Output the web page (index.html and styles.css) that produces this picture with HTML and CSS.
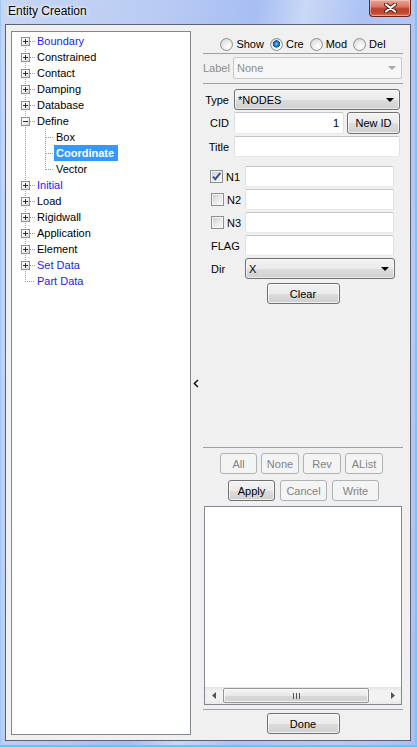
FILE: index.html
```html
<!DOCTYPE html>
<html lang="en">
<head>
  <meta charset="UTF-8" />
  <title>Entity Creation</title>
  <link rel="stylesheet" href="styles.css">
</head>
<body>
  <div class="window">
    <div class="titlebar">
      <span class="title">Entity Creation</span>
      <button class="close">
        <svg width="13" height="10" viewBox="0 0 13 10">
          <path d="M2 1.5 L11 8.5 M11 1.5 L2 8.5" stroke="#4a1a14" stroke-width="4" stroke-linecap="round"/>
          <path d="M2 1.5 L11 8.5 M11 1.5 L2 8.5" stroke="#fff" stroke-width="2.2" stroke-linecap="round"/>
        </svg>
      </button>
    </div>

    <div class="client">
      <!-- Tree -->
      <div class="tree">
        <ul class="nodes">
          <li class="row"><span class="tog"></span><span class="dash"></span><span class="lbl blue">Boundary</span></li>
          <li class="row"><span class="tog"></span><span class="dash"></span><span class="lbl">Constrained</span></li>
          <li class="row"><span class="tog"></span><span class="dash"></span><span class="lbl">Contact</span></li>
          <li class="row"><span class="tog"></span><span class="dash"></span><span class="lbl">Damping</span></li>
          <li class="row"><span class="tog"></span><span class="dash"></span><span class="lbl">Database</span></li>
          <li>
            <div class="row"><span class="tog open"></span><span class="dash"></span><span class="lbl">Define</span></div>
            <ul class="kids">
              <li class="row"><span class="dash kid"></span><span class="lbl">Box</span></li>
              <li class="row"><span class="dash kid"></span><span class="lbl sel">Coordinate</span></li>
              <li class="row"><span class="dash kid"></span><span class="lbl">Vector</span></li>
            </ul>
          </li>
          <li class="row"><span class="tog"></span><span class="dash"></span><span class="lbl blue">Initial</span></li>
          <li class="row"><span class="tog"></span><span class="dash"></span><span class="lbl">Load</span></li>
          <li class="row"><span class="tog"></span><span class="dash"></span><span class="lbl">Rigidwall</span></li>
          <li class="row"><span class="tog"></span><span class="dash"></span><span class="lbl">Application</span></li>
          <li class="row"><span class="tog"></span><span class="dash"></span><span class="lbl">Element</span></li>
          <li class="row"><span class="tog"></span><span class="dash"></span><span class="lbl blue">Set Data</span></li>
          <li class="row"><span class="dash leaf"></span><span class="lbl blue">Part Data</span></li>
        </ul>
      </div>

      <div class="splitter">
        <svg width="6" height="9" viewBox="0 0 6 9"><polyline points="5,1 1.3,4.5 5,8" fill="none" stroke="#000" stroke-width="1.3"/></svg>
      </div>

      <!-- Form -->
      <div class="panel">
        <div class="modes">
          <label class="opt"><span class="radio"></span>Show</label>
          <label class="opt"><span class="radio on"></span>Cre</label>
          <label class="opt"><span class="radio"></span>Mod</label>
          <label class="opt"><span class="radio"></span>Del</label>
        </div>
        <div class="sep sep-a"></div>

        <div class="line line-label">
          <span class="lab off">Label</span>
          <div class="combo off wide"><span>None</span><span class="arrow grey"></span></div>
        </div>
        <div class="sep sep-b"></div>

        <div class="line line-type">
          <span class="lab">Type</span>
          <div class="combo type"><span>*NODES</span><span class="arrow"></span></div>
        </div>
        <div class="line line-cid">
          <span class="lab">CID</span>
          <div class="field cid">1</div>
          <button class="btn newid">New ID</button>
        </div>
        <div class="line line-title">
          <span class="lab">Title</span>
          <div class="field title-in"></div>
        </div>

        <div class="line node n1">
          <span class="chk"><span class="box on"><svg width="11" height="11" viewBox="0 0 11 11"><path d="M2 5.5 L4.3 8.2 L9.3 1.8" fill="none" stroke="#3b4f8c" stroke-width="1.9"/></svg></span>N1</span>
          <div class="field nin"></div>
        </div>
        <div class="line node">
          <span class="chk shift"><span class="box"></span>N2</span>
          <div class="field nin"></div>
        </div>
        <div class="line node">
          <span class="chk shift"><span class="box"></span>N3</span>
          <div class="field nin"></div>
        </div>
        <div class="line node">
          <span class="chk plain">FLAG</span>
          <div class="field nin"></div>
        </div>
        <div class="line node">
          <span class="chk plain">Dir</span>
          <div class="combo dir"><span>X</span><span class="arrow"></span></div>
        </div>
        <div class="center clear-row"><button class="btn wide-btn">Clear</button></div>

        <div class="spacer"></div>

        <div class="sep sep-c"></div>
        <div class="center btns1">
          <button class="btn off small">All</button>
          <button class="btn off mid">None</button>
          <button class="btn off mid">Rev</button>
          <button class="btn off mid">AList</button>
        </div>
        <div class="center btns2">
          <button class="btn act">Apply</button>
          <button class="btn off act">Cancel</button>
          <button class="btn off act">Write</button>
        </div>

        <div class="list">
          <div class="list-body"></div>
          <div class="hscroll">
            <span class="sbtn"><svg width="4" height="7" viewBox="0 0 4 7"><polygon points="4,0 0,3.5 4,7" fill="#555"/></svg></span>
            <div class="track">
              <div class="thumb">
                <svg width="7" height="6" viewBox="0 0 7 6"><rect x="0" y="0" width="1" height="6" fill="#555"/><rect x="3" y="0" width="1" height="6" fill="#555"/><rect x="6" y="0" width="1" height="6" fill="#555"/></svg>
              </div>
            </div>
            <span class="sbtn"><svg width="4" height="7" viewBox="0 0 4 7"><polygon points="0,0 4,3.5 0,7" fill="#555"/></svg></span>
          </div>
        </div>

        <div class="sep sep-d"></div>
        <div class="center done-row"><button class="btn wide-btn">Done</button></div>
      </div>
    </div>
  </div>
</body>
</html>
```

FILE: styles.css
```css
* { box-sizing: border-box; }
html, body {
  margin: 0;
  padding: 0;
}
body {
  width: 417px;
  height: 747px;
  overflow: hidden;
  font-family: "Liberation Sans", Arial, sans-serif;
  font-size: 11px;
  color: #000;
}
ul { list-style: none; margin: 0; padding: 0; }
button { font: inherit; color: inherit; padding: 0; }

/* Aero frame */
.window {
  width: 417px;
  height: 747px;
  display: flex;
  flex-direction: column;
  padding: 0 6px 6px 5px;
  background: linear-gradient(100deg, #c7d6f5 0%, #b9cbf3 30%, #a7bef4 47%, #cad8f6 56%, #adc3f4 66%, #b8caf4 85%, #a9c0f3 100%);
  box-shadow: inset 0 -2px 0 #4fcff6, inset -2px 0 0 #6fc9f4, inset 1px 0 0 #9fc8f2;
}
.titlebar {
  height: 24px;
  display: flex;
  justify-content: space-between;
  align-items: flex-start;
  padding-left: 3px;
}
.title {
  font-size: 12px;
  line-height: 23px;
  text-shadow: 0 0 6px #fff, 0 0 3px #fff;
}
.close {
  width: 42px;
  height: 17px;
  border: 1px solid #6b2219;
  border-top: none;
  border-radius: 0 0 4px 4px;
  background: linear-gradient(#e7a596 0%, #d87a68 40%, #c2402c 55%, #c4472f 80%, #d4764a 100%);
  box-shadow: inset 0 0 0 1px rgba(255, 220, 210, 0.5);
  display: flex;
  align-items: center;
  justify-content: center;
}

.client {
  flex: 1;
  display: flex;
  border: 1px solid #5b6372;
  background: #f0f0f0;
  padding: 6px 7px 5px 5px;
}

/* Tree */
.tree {
  width: 180px;
  border: 1px solid #828790;
  background: #fff;
}
.nodes {
  padding-top: 1px;
  background: repeating-linear-gradient(#a0a0a0 0 1px, transparent 1px 2px) 13px 9px / 1px 241px no-repeat;
}
.kids {
  background: repeating-linear-gradient(#a0a0a0 0 1px, transparent 1px 2px) 33px 0 / 1px 41px no-repeat;
}
.row {
  display: flex;
  align-items: flex-start;
  height: 16px;
}
.tog {
  width: 9px;
  height: 9px;
  margin: 4px 0 0 9px;
  border: 1px solid #8f8f8f;
  background:
    linear-gradient(#1e2a4a, #1e2a4a) center / 5px 1px no-repeat,
    linear-gradient(#1e2a4a, #1e2a4a) center / 1px 5px no-repeat,
    linear-gradient(135deg, #fff 30%, #d4d4d4);
}
.tog.open {
  background:
    linear-gradient(#1e2a4a, #1e2a4a) center / 5px 1px no-repeat,
    linear-gradient(135deg, #fff 30%, #d4d4d4);
}
.dash {
  width: 5px;
  height: 1px;
  margin-top: 8px;
  background: repeating-linear-gradient(to right, #a0a0a0 0 1px, transparent 1px 2px);
}
.dash.kid { width: 8px; margin-left: 34px; }
.dash.leaf { width: 10px; margin-left: 13px; }
.lbl {
  line-height: 16px;
  padding: 0 2px;
  white-space: nowrap;
}
.blue { color: #1a1af0; }
.lbl.sel {
  background: #3399ff;
  color: #fff;
  font-weight: bold;
  padding: 0 4px 0 2px;
}

.splitter {
  width: 12px;
  display: flex;
  align-items: center;
  padding-left: 2px;
}

/* Form panel */
.panel {
  width: 200px;
  display: flex;
  flex-direction: column;
}
.modes {
  margin-top: 5px;
  height: 16px;
  display: flex;
  justify-content: center;
  align-items: center;
  gap: 6px;
}
.opt {
  display: flex;
  align-items: center;
  gap: 3px;
}
.radio {
  width: 13px;
  height: 13px;
  border-radius: 50%;
  border: 1px solid #8e8f8f;
  background: radial-gradient(circle at 65% 70%, #fff 0, #ececec 45%, #c9cbce 100%);
}
.radio.on {
  background:
    radial-gradient(circle at 50% 45%, #7fd4ff 0, #2a86d2 1.8px, #0f4d8e 3.4px, transparent 3.9px),
    radial-gradient(circle at 65% 70%, #fff 0, #ececec 45%, #c9cbce 100%);
}

.sep { border-top: 1px solid #a0a0a0; }
.sep-a { margin: 1px 0 3px; }
.sep-b { margin: 4px 0 0; }
.sep-c { margin: 0 0 5px; }
.sep-d { margin: 4px 0 0; }

.line {
  display: flex;
  align-items: center;
}
.lab {
  width: 30px;
  padding-right: 4px;
  text-align: right;
}
.lab.off { color: #8d8d8d; }
.line-label { height: 22px; }
.line-type { height: 21px; margin-top: 5px; }
.line-cid { height: 22px; margin-top: 2px; }
.line-title { height: 21px; margin-top: 2px; }
.node { height: 21px; margin-top: 2px; }
.n1 { margin-top: 9px; }

.combo {
  height: 21px;
  display: flex;
  align-items: center;
  justify-content: space-between;
  padding: 0 5px 0 3px;
  border: 1px solid #707070;
  border-radius: 3px;
  background: linear-gradient(#f2f2f2 0%, #ebebeb 50%, #dddddd 51%, #cfcfcf 100%);
  box-shadow: inset 0 0 0 1px rgba(255, 255, 255, 0.55);
}
.combo.off {
  height: 22px;
  border-color: #c8c8c8;
  border-radius: 2px;
  background: #f7f7f7;
  color: #8d8d8d;
  box-shadow: none;
}
.combo.wide { width: 169px; }
.combo.type { width: 166px; margin-left: 1px; }
.combo.dir { width: 150px; }
.arrow {
  width: 0;
  height: 0;
  border-left: 4px solid transparent;
  border-right: 4px solid transparent;
  border-top: 4px solid #000;
}
.arrow.grey { border-top-color: #a8a8a8; }

.field {
  height: 21px;
  background: #fff;
  border: 1px solid;
  border-color: #c2c6cc #dde1e6 #e3e9ef #dde1e6;
  border-radius: 2px;
}
.field.cid {
  width: 110px;
  height: 22px;
  margin-left: 1px;
  text-align: right;
  line-height: 20px;
  padding-right: 4px;
}
.field.title-in { width: 166px; margin-left: 1px; }
.field.nin { width: 149px; }

.chk {
  width: 42px;
  display: flex;
  align-items: center;
  gap: 3px;
  padding-left: 7px;
}
.chk.shift { padding-left: 8px; }
.chk.plain { padding-left: 8px; }
.box {
  width: 13px;
  height: 13px;
  border: 1px solid #8e8f8f;
  background: linear-gradient(135deg, #c6cad0 0%, #e9eaeb 55%, #fbfbfb 100%);
  box-shadow: inset 0 0 0 1px #f3f3f3;
}
.box svg { display: block; }

.btn {
  height: 21px;
  border: 1px solid #707070;
  border-radius: 3px;
  background: linear-gradient(#f2f2f2 0%, #ebebeb 50%, #dddddd 51%, #cfcfcf 100%);
  box-shadow: inset 0 0 0 1px rgba(255, 255, 255, 0.7);
}
.btn.off {
  border-color: #adb2b5;
  background: #f4f4f4;
  color: #838383;
  box-shadow: none;
}
.newid { width: 53px; height: 22px; margin-left: 3px; }
.wide-btn { width: 73px; }
.small { width: 37px; }
.mid { width: 38px; }
.act { width: 47px; }

.center {
  display: flex;
  justify-content: center;
}
.clear-row { margin-top: 4px; }
.btns1 { gap: 4px; padding-right: 3px; }
.btns2 { gap: 5px; margin-top: 6px; padding-left: 1px; }
.done-row { margin: 3px 0 1px; }
.spacer { flex: 1; }

.list {
  width: 198px;
  height: 199px;
  margin: 5px 0 0 1px;
  border: 1px solid #828790;
  background: #fff;
  display: flex;
  flex-direction: column;
}
.list-body { flex: 1; }
.hscroll {
  height: 17px;
  display: flex;
  background: linear-gradient(#e4e4e4, #f2f2f2 25%, #f2f2f2 75%, #e8e8e8);
}
.sbtn {
  width: 17px;
  display: flex;
  align-items: center;
  justify-content: center;
}
.track { flex: 1; }
.thumb {
  width: 146px;
  height: 15px;
  margin: 1px 0 0 1px;
  border: 1px solid #979797;
  border-radius: 2px;
  background: linear-gradient(#f4f4f4 0%, #eaeaea 50%, #dadada 51%, #d0d0d0 100%);
  box-shadow: inset 0 0 0 1px rgba(255, 255, 255, 0.7);
  display: flex;
  align-items: center;
  justify-content: center;
}
```
